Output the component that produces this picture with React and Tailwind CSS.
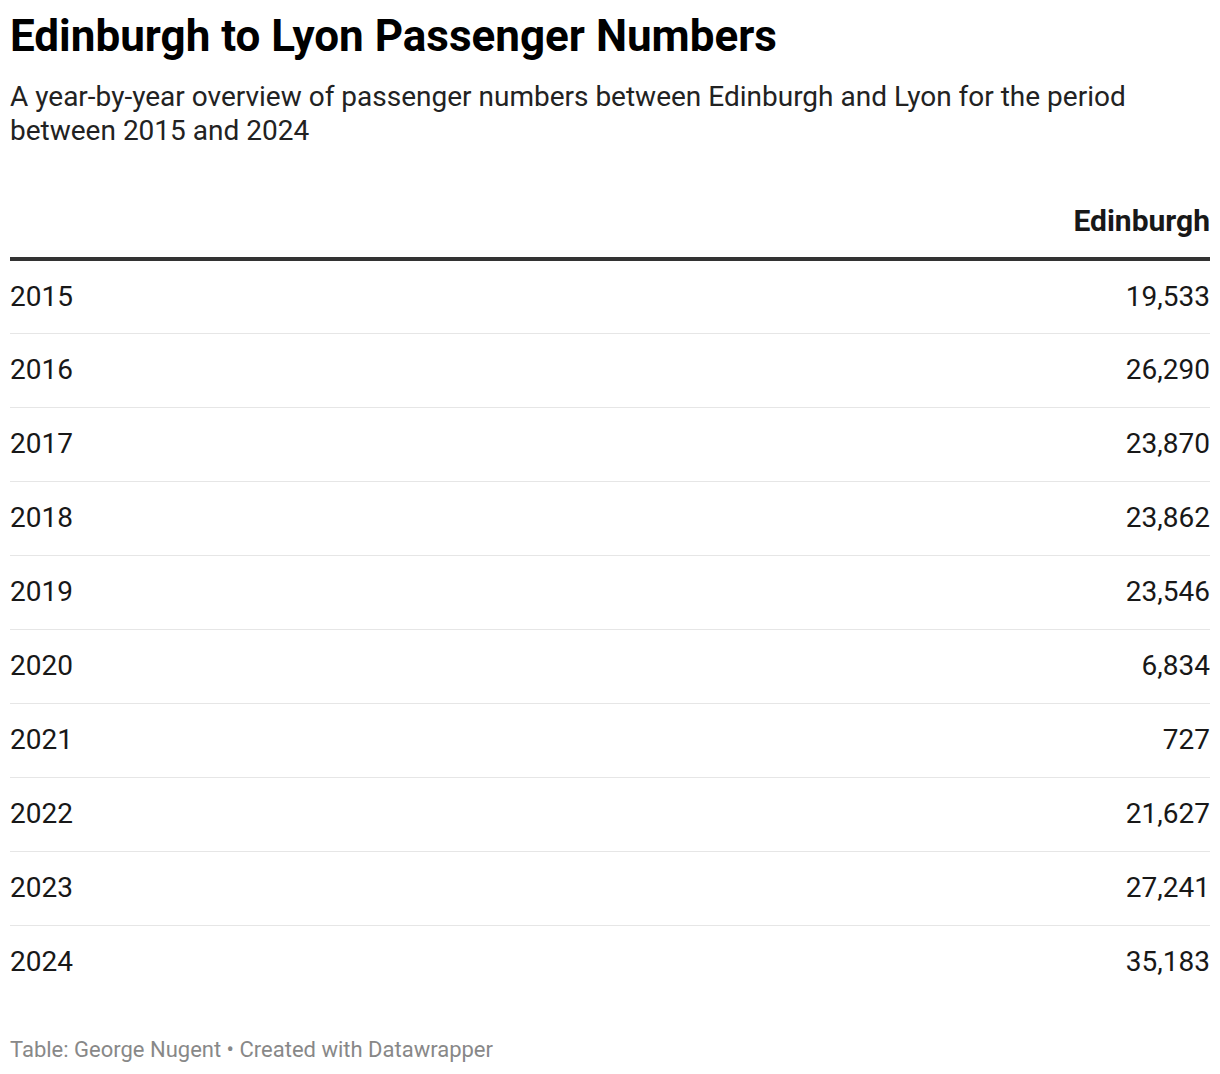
const rows = [
  ['2015', '19,533'],
  ['2016', '26,290'],
  ['2017', '23,870'],
  ['2018', '23,862'],
  ['2019', '23,546'],
  ['2020', '6,834'],
  ['2021', '727'],
  ['2022', '21,627'],
  ['2023', '27,241'],
  ['2024', '35,183'],
]

export default function App() {
  return (
    <div className="bg-white min-h-screen px-[10px] pt-[12px] text-[#181818]" style={{ fontFamily: 'Roboto, sans-serif' }}>
      <h1 className="text-[44px] leading-[48px] font-bold text-black">Edinburgh to Lyon Passenger Numbers</h1>
      <p className="mt-[20px] text-[28px] leading-[34px] text-[#222]">
        A year-by-year overview of passenger numbers between Edinburgh and Lyon for the period between 2015 and 2024
      </p>
      <table className="w-full mt-[56px] border-collapse">
        <thead>
          <tr className="border-b-4 border-[#333]">
            <th></th>
            <th className="text-right text-[30px] leading-[34px] font-bold pb-[19px]">Edinburgh</th>
          </tr>
        </thead>
        <tbody>
          {rows.map(([year, value], i) => (
            <tr key={year} className={i < rows.length - 1 ? 'border-b border-[#e6e6e6]' : ''}>
              <td className="text-[28px] h-[74px] text-left">{year}</td>
              <td className="text-[28px] h-[74px] text-right">{value}</td>
            </tr>
          ))}
        </tbody>
      </table>
      <div className="mt-[34px] text-[22px] leading-[33px] text-[#888]">Table: George Nugent • Created with Datawrapper</div>
    </div>
  )
}
